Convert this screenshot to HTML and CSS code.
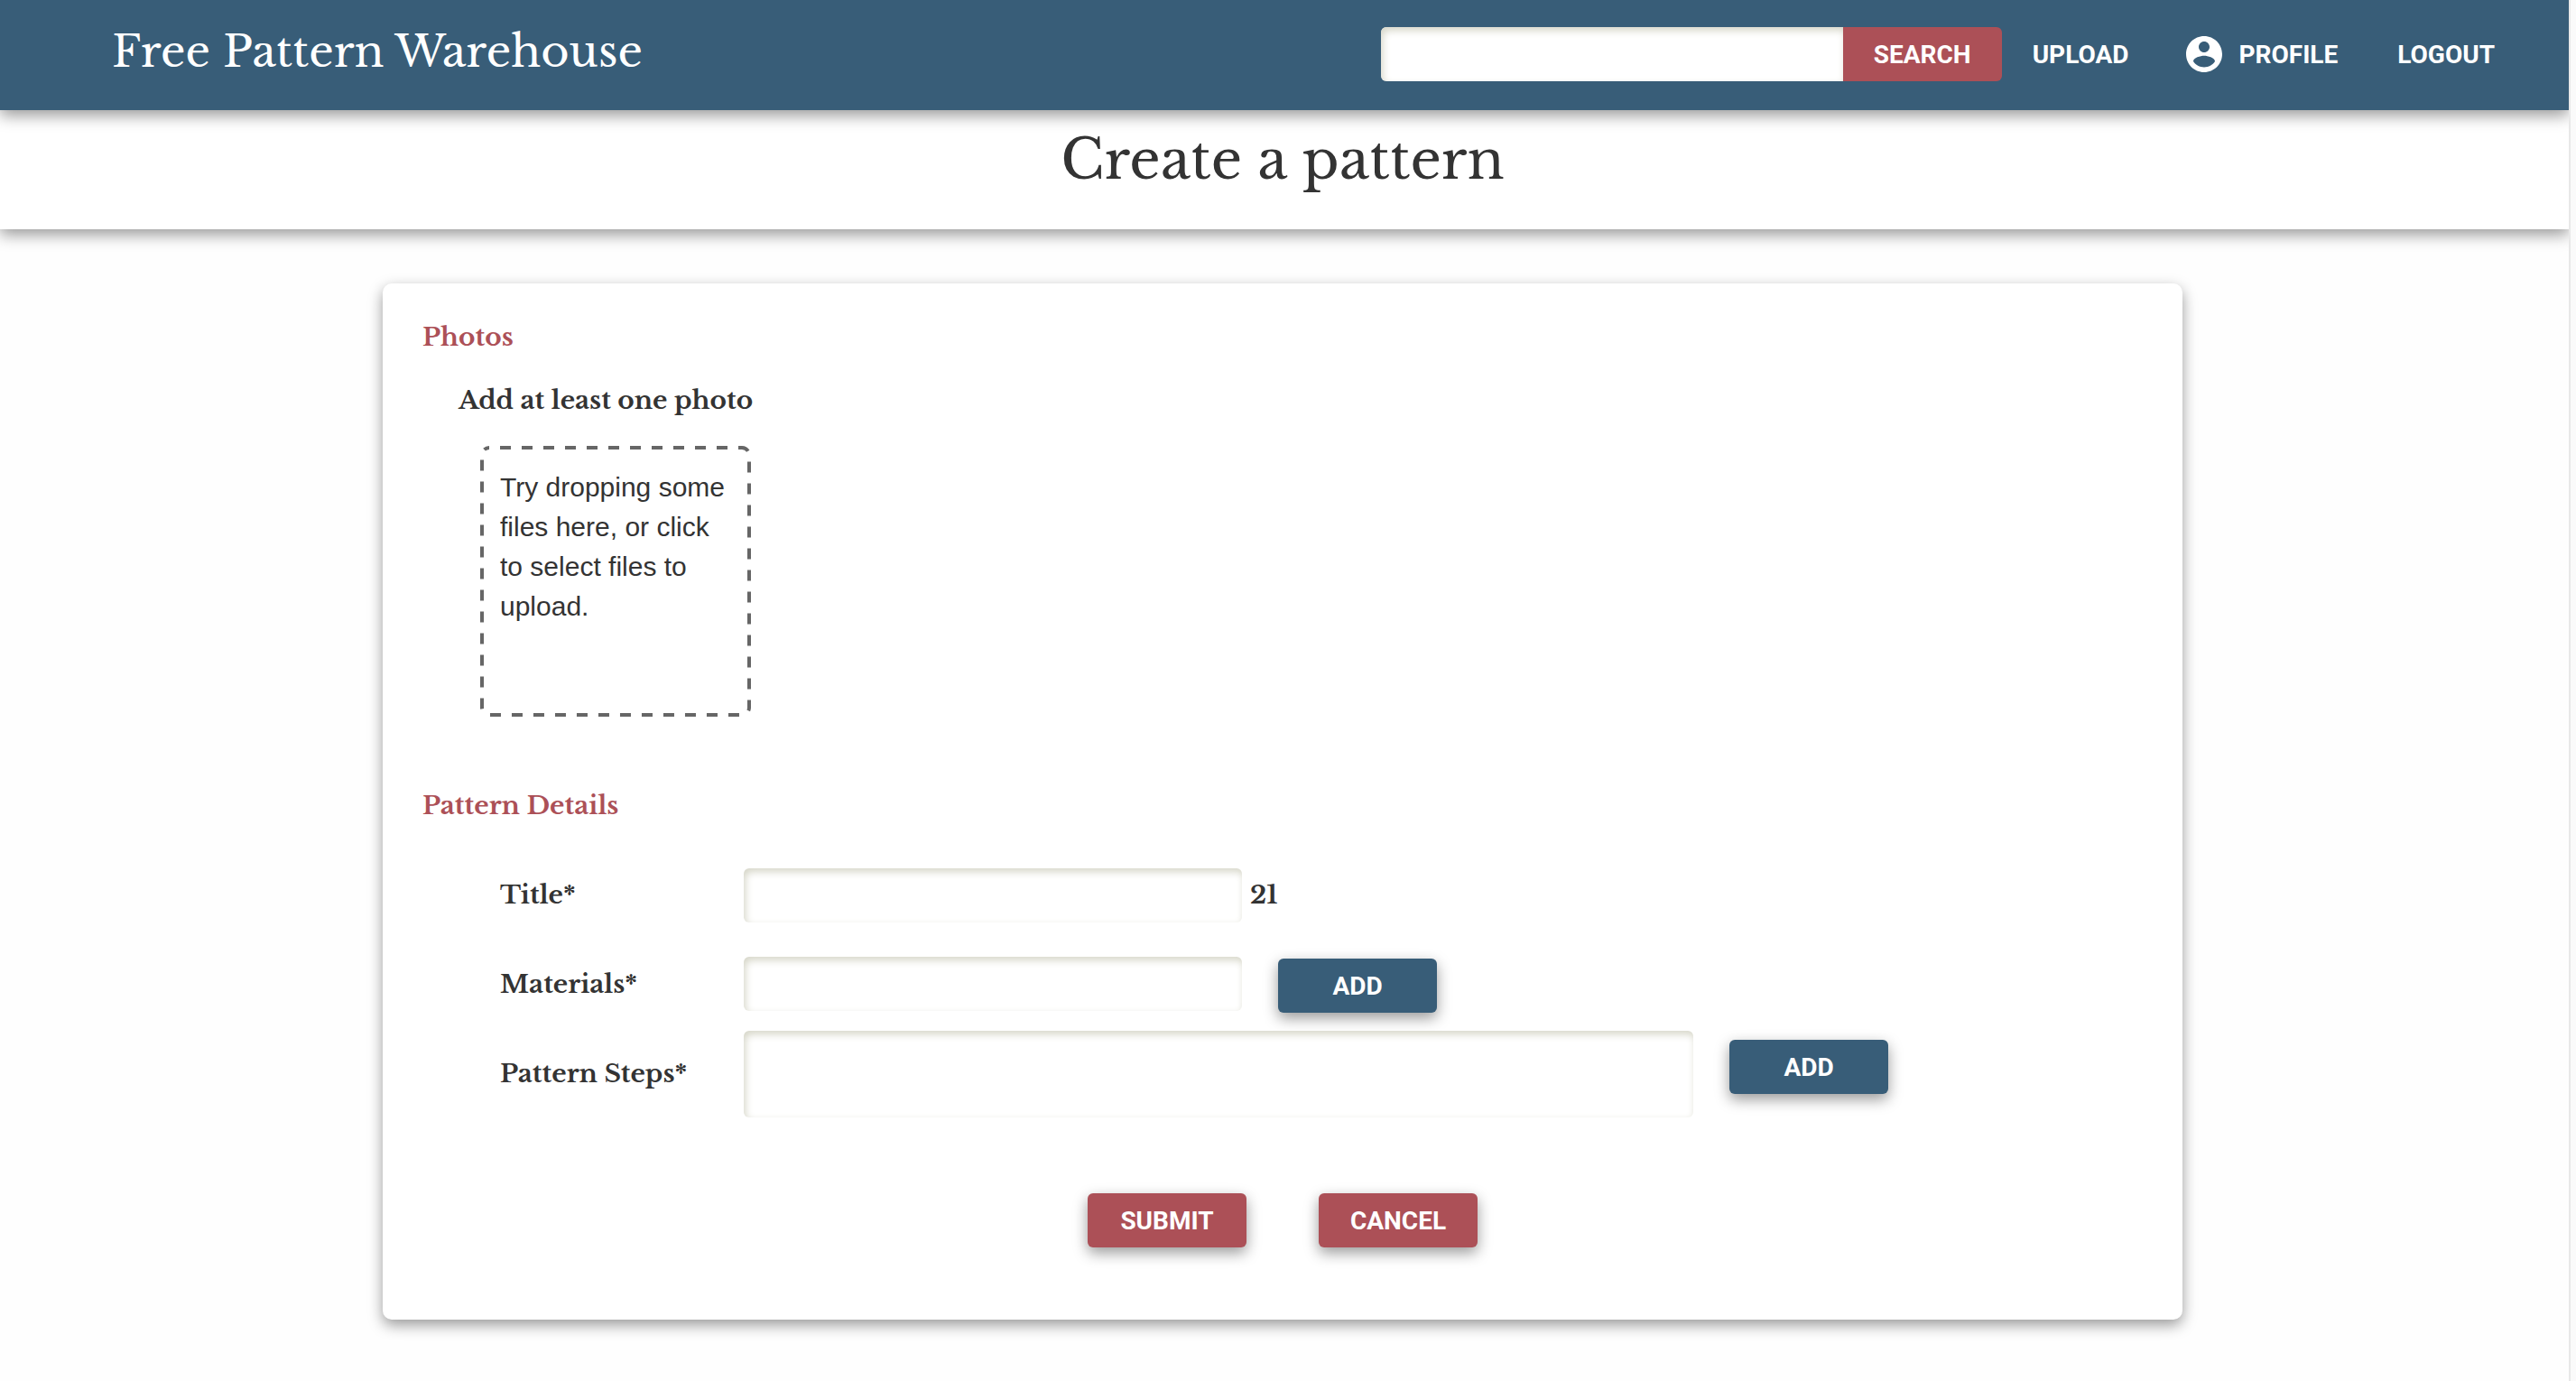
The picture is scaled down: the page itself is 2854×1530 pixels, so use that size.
FILE: index.html
```html
<!DOCTYPE html>
<html lang="en">
<head>
  <meta charset="utf-8">
  <title>Create a pattern - Free Pattern Warehouse</title>
  <link rel="stylesheet" href="styles.css">
</head>
<body>
  <div class="page">
    <header class="site-header">
      <a class="brand" href="#">Free Pattern Warehouse</a>
      <form class="search" role="search">
        <input class="search-input" type="text" aria-label="Search patterns">
        <button class="search-button" type="submit">SEARCH</button>
      </form>
      <nav class="site-nav">
        <a href="#">UPLOAD</a>
        <a href="#">
          <svg class="profile-icon" viewBox="0 0 24 24" aria-hidden="true"><path fill="currentColor" d="M12 2C6.48 2 2 6.48 2 12s4.480 10 10 10 10-4.480 10-10S17.520 2 12 2zm0 3c1.660 0 3 1.340 3 3s-1.340 3-3 3-3-1.340-3-3 1.340-3 3-3zm0 14.200c-2.500 0-4.710-1.280-6-3.220.03-1.990 4-3.080 6-3.080 1.990 0 5.970 1.090 6 3.080-1.290 1.940-3.500 3.220-6 3.220z"/></svg>
          PROFILE
        </a>
        <a href="#">LOGOUT</a>
      </nav>
    </header>

    <div class="title-bar">
      <h1>Create a pattern</h1>
    </div>

    <main class="content">
      <form class="card">
        <section class="photos">
          <h2>Photos</h2>
          <h3>Add at least one photo</h3>
          <button class="dropzone" type="button">
            <svg class="dropzone-outline" viewBox="0 0 300 300" aria-hidden="true"><rect x="2" y="2" width="296" height="296" rx="8" fill="none" stroke="#666" stroke-width="4" stroke-dasharray="12 12" stroke-dashoffset="12"/></svg>
            Try dropping some files here, or click to select files to upload.
          </button>
        </section>

        <section class="details">
          <h2>Pattern Details</h2>
          <div class="field">
            <label for="title">Title*</label>
            <input class="text-box" id="title" type="text">
            <output class="counter" for="title">21</output>
          </div>
          <div class="field field-materials">
            <label for="materials">Materials*</label>
            <input class="text-box" id="materials" type="text">
            <button class="button button-add" type="button">ADD</button>
          </div>
          <div class="field field-steps">
            <label for="steps">Pattern Steps*</label>
            <textarea class="text-box text-area" id="steps"></textarea>
            <button class="button button-add" type="button">ADD</button>
          </div>
        </section>

        <div class="actions">
          <button class="button" type="submit">SUBMIT</button>
          <button class="button" type="button">CANCEL</button>
        </div>
      </form>
    </main>
  </div>
</body>
</html>
```
FILE: styles.css
```css
:root {
  --blue: #385d78;
  --red: #ac5057;
  --ink: #333;
  --shadow: 0 6px 16px rgba(0, 0, 0, 0.4);
  --inset: inset 2px 4px 8px #d6d6c8;
  --serif: "Libre Baskerville", "Liberation Serif", serif;
}

* {
  box-sizing: border-box;
}

html {
  background: #fafafa;
}

body {
  margin: 0;
  color: var(--ink);
  font-family: var(--serif);
}

h1,
h2,
h3 {
  margin: 0;
}

input,
textarea,
button {
  margin: 0;
  border: 0;
  font: inherit;
}

/* The right edge leaves a narrow gutter beside the page. */
.page {
  min-height: 100vh;
  margin-right: 6px;
  border-right: 2px solid #e8e8e8;
  background: #fefefe;
  overflow: hidden;
}

/* Header */
.site-header {
  position: relative;
  display: flex;
  align-items: center;
  min-height: 122px;
  padding: 0 82px 2px 124px;
  background: var(--blue);
  box-shadow: var(--shadow);
  color: #fff;
}

.brand {
  margin-right: auto;
  padding-bottom: 6px;
  color: inherit;
  font-size: 48px;
  line-height: 60px;
  text-decoration: none;
}

.search {
  display: flex;
}

.search-input {
  width: 512px;
  height: 60px;
  padding: 0 16px;
  border-radius: 6px 0 0 6px;
  background: #fff;
  box-shadow: var(--inset);
  font: 30px "Liberation Sans", sans-serif;
}

.search-button {
  width: 176px;
  height: 60px;
  padding: 0;
  border-radius: 0 6px 6px 0;
  background: var(--red);
  color: #fff;
  font: bold 28px Roboto, sans-serif;
}

.site-nav {
  display: flex;
  align-items: center;
  gap: 66px;
  margin-left: 34px;
  font: bold 28px Roboto, sans-serif;
}

.site-nav a {
  display: flex;
  align-items: center;
  gap: 14px;
  color: inherit;
  text-decoration: none;
}

.profile-icon {
  width: 48px;
  height: 48px;
  margin-left: -6px;
}

/* Page title */
.title-bar {
  padding: 0 4px 22px 0;
  background: #fff;
  box-shadow: var(--shadow);
  text-align: center;
}

.title-bar h1 {
  font-size: 60px;
  font-weight: normal;
  line-height: 110px;
}

/* Card */
.content {
  padding: 60px 428px 64px 424px;
}

.card {
  padding: 40px 44px 80px;
  border-radius: 10px;
  background: #fff;
  box-shadow: var(--shadow);
}

h2,
h3,
.field {
  font-size: 28px;
  font-weight: bold;
  line-height: 40px;
}

h2 {
  color: var(--red);
}

h3 {
  margin: 30px 0 30px 40px;
}

.dropzone {
  position: relative;
  display: flex;
  align-items: flex-start;
  width: 300px;
  height: 300px;
  margin-left: 64px;
  padding: 24px 22px;
  background: none;
  color: var(--ink);
  font: 30px/44px "Liberation Sans", sans-serif;
  text-align: left;
}

.dropzone-outline {
  position: absolute;
  inset: 0;
}

/* Form fields */
.details {
  margin-top: 79px;
}

.details h2 {
  margin-bottom: 49px;
}

.field {
  display: grid;
  grid-template-columns: 270px auto 1fr;
  align-items: center;
  margin-left: 86px;
}

.field-materials {
  margin-top: 38px;
}

.field-steps {
  margin-top: 20px;
}

.text-box {
  align-self: start;
  width: 552px;
  height: 60px;
  padding: 0 16px;
  border-radius: 6px;
  background: #fff;
  box-shadow: var(--inset);
  font: 30px "Liberation Sans", sans-serif;
}

.text-area {
  width: 1052px;
  height: 96px;
  padding: 12px 16px;
  resize: none;
}

.counter {
  margin-left: 9px;
}

.button {
  width: 176px;
  height: 60px;
  padding: 0;
  border-radius: 6px;
  background: var(--red);
  box-shadow: var(--shadow);
  color: #fff;
  font: bold 28px Roboto, sans-serif;
}

.button-add {
  align-self: start;
  margin: 2px 0 0 40px;
  background: var(--blue);
}

.field-steps .button-add {
  margin-top: 10px;
}

.actions {
  display: flex;
  justify-content: center;
  gap: 80px;
  margin-top: 84px;
}
```
